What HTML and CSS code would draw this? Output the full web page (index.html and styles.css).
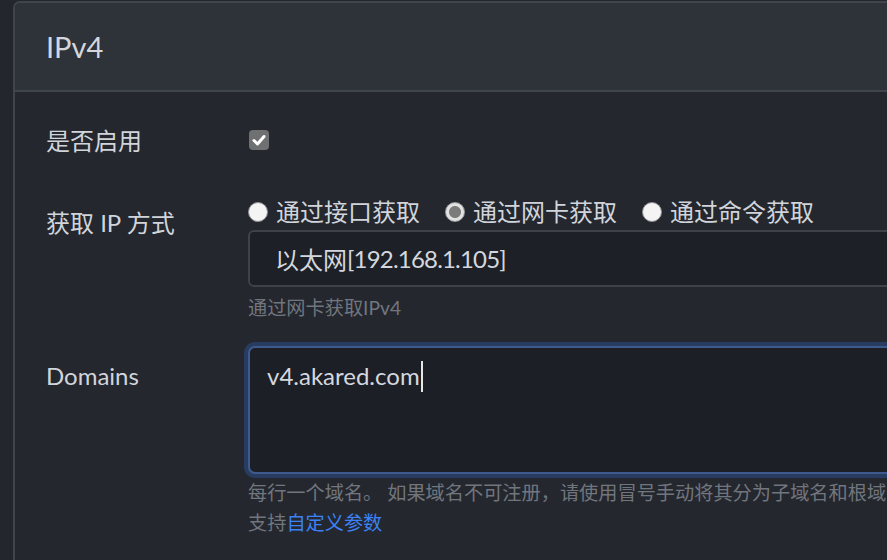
FILE: index.html
```html
<!DOCTYPE html>
<html lang="zh-CN">
<head>
<meta charset="utf-8">
<title>IPv4</title>
<link rel="stylesheet" href="styles.css">
</head>
<body>
<div class="page">
  <section class="card">
    <header class="card-header">
      <h3 class="card-title">IPv4</h3>
    </header>
    <div class="card-body">
      <div class="row row-enable">
        <label class="row-label">是否启用</label>
        <div class="row-control control-center">
          <span class="checkbox checked">
            <svg viewBox="0 0 20 20" width="20" height="20"><path d="M5 10.5 L8.5 14 L15 6.5" fill="none" stroke="#ffffff" stroke-width="3" stroke-linecap="round" stroke-linejoin="round"/></svg>
          </span>
        </div>
      </div>

      <div class="row row-method">
        <label class="row-label label-offset">获取 IP 方式</label>
        <div class="row-control">
          <div class="radios">
            <span class="radio-option"><span class="radio"></span><span>通过接口获取</span></span>
            <span class="radio-option"><span class="radio checked"></span><span>通过网卡获取</span></span>
            <span class="radio-option"><span class="radio"></span><span>通过命令获取</span></span>
          </div>
          <div class="select">以太网<span class="addr">[192.168.1.105]</span></div>
          <div class="help">通过网卡获取IPv4</div>
        </div>
      </div>

      <div class="row row-domains">
        <label class="row-label label-offset2">Domains</label>
        <div class="row-control">
          <div class="textarea"><span>v4.akared.com</span><span class="caret"></span></div>
          <div class="help help-domains">每行一个域名。 如果域名不可注册，请使用冒号手动将其分为子域名和根域名，例如 www:example.com.cn</div>
          <div class="help">支持<a class="link" href="#">自定义参数</a></div>
        </div>
      </div>
    </div>
  </section>
</div>
</body>
</html>
```

FILE: styles.css
```css
html, body {
  margin: 0;
  padding: 0;
  background: #23262c;
  overflow: hidden;
  height: 100%;
}

body {
  font-family: Lato, "Noto Sans CJK SC", sans-serif;
  font-size: 24px;
  color: #d1d5db;
}

.page {
  padding: 1px 0 0 13px;
}

.card {
  width: 1400px;
  border: 2px solid #40454d;
  border-radius: 7px;
  background: #24272e;
  overflow: hidden;
}

.card-header {
  background: #2e3239;
  border-bottom: 2px solid #40454d;
  padding: 26px 31px;
}

.card-title {
  margin: 0;
  font-size: 29px;
  font-weight: 400;
  line-height: 35px;
  color: #d3d7dd;
}

.card-body {
  padding: 31px 31px 40px 31px;
}

.row {
  display: flex;
  align-items: flex-start;
}

.row-label {
  flex: 0 0 202px;
  line-height: 36px;
}

.label-offset {
  padding-top: 11px;
}

.label-offset2 {
  padding-top: 12px;
}

.row-control {
  flex: 1 1 auto;
  min-width: 0;
}

.control-center {
  display: flex;
  align-items: center;
  height: 36px;
}

.row-method {
  margin-top: 35px;
}

.row-domains {
  margin-top: 23px;
}

.checkbox {
  width: 20px;
  height: 20px;
  border-radius: 4px;
  background: #6f7071;
  display: flex;
  align-items: center;
  justify-content: center;
  margin-top: -2px;
  margin-left: 1px;
}

.radios {
  display: flex;
  align-items: center;
  line-height: 36px;
}

.radio-option {
  display: flex;
  align-items: center;
  gap: 8px;
  margin-right: 25px;
}

.radio {
  width: 20px;
  height: 20px;
  box-sizing: border-box;
  border-radius: 50%;
  background: #f4f4f4;
  border: 1px solid #8d8f93;
  flex: 0 0 auto;
}

.radio.checked {
  background: radial-gradient(circle, #7b7b7b 0 5.5px, #e2e2e2 6.5px);
  border-color: #9a9ca0;
}

.select {
  box-sizing: border-box;
  height: 57px;
  border: 2px solid #3e4249;
  border-radius: 6px;
  background: #1e2027;
  padding-left: 25px;
  display: flex;
  align-items: center;
  color: #d4d8de;
}

.addr {
  letter-spacing: -0.8px;
}

.help {
  font-size: 19.2px;
  line-height: 30px;
  color: #71767e;
  white-space: nowrap;
}

.select + .help {
  margin-top: 6px;
}

.textarea {
  box-sizing: border-box;
  height: 128px;
  border: 2px solid #3f5b8e;
  border-radius: 7px;
  background: #1d1f26;
  box-shadow: 0 0 0 4px #283c62;
  padding: 10px 17px;
  line-height: 36px;
  color: #d4d8de;
}

.caret {
  display: inline-block;
  width: 2px;
  height: 31px;
  background: #e6e6e6;
  vertical-align: middle;
  margin-left: 1px;
  margin-top: -4px;
}

.help-domains {
  margin-top: 4px;
}

.link {
  color: #3b82f6;
  text-decoration: none;
}
```
